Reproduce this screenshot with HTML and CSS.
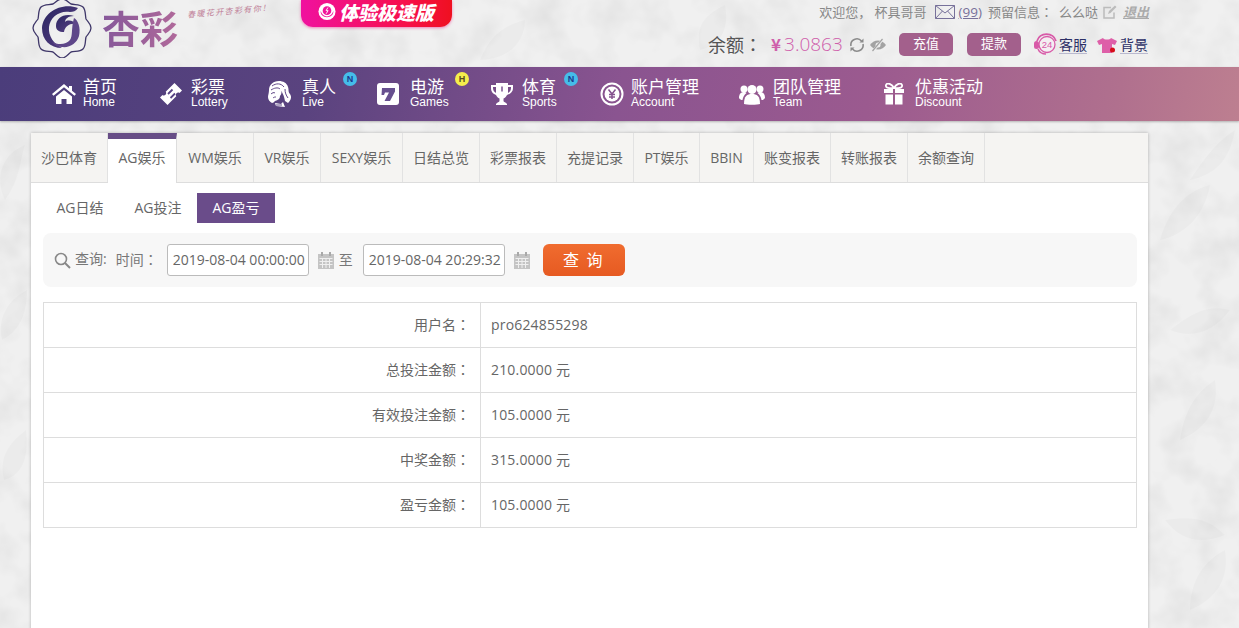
FILE: index.html
```html
<!DOCTYPE html>
<html lang="zh">
<head>
<meta charset="utf-8">
<title>AG盈亏</title>
<link rel="stylesheet" href="styles.css">
</head>
<body>
<header class="top">
  <div class="brand">
    <svg class="logo-mark" viewBox="0 0 60 60">
      <defs><linearGradient id="lg" x1="0" y1="0" x2="1" y2="1"><stop offset="0" stop-color="#2a2560"/><stop offset="1" stop-color="#5b4287"/></linearGradient></defs>
      <path d="M30 1c4 0 6 3 9 5 4 1 9 0 12 3s2 8 3 12c2 3 5 5 5 9s-3 6-5 9c-1 4 0 9-3 12s-8 2-12 3c-3 2-5 6-9 6s-6-4-9-6c-4-1-9 0-12-3s-2-8-3-12c-2-3-5-5-5-9s3-6 5-9c1-4 0-9 3-12s8-2 12-3c3-2 5-5 9-5z" fill="none" stroke="#3f3769" stroke-width="1.300"/>
      <path d="M46 10C30 4 11 14 10 30c0 12 8 20 20 20-8-4-14-12-13-21 1-10 11-17 21-15 3 0 6-1 8-4z" fill="url(#lg)"/>
      <path d="M24 28c0-8 8-13 18-10-6 0-9 3-9 6 3-3 9-1 11 2-6-1-11 2-12 8-5 0-8-2-8-6z" fill="url(#lg)"/>
      <path d="M42 20c4 2 7 10 5 18-2 7-9 12-17 11-4 0-8-2-10-5 6 3 14 3 18-2 3-4 1-12 4-22z" fill="#5e4689"/>
    </svg>
    <span class="logo-word">杏彩</span>
    <span class="slogan">春暖花开杏彩有你！</span>
  </div>
  <a class="speed">
    <svg class="speed-icon" viewBox="0 0 20 20"><circle cx="10" cy="9.500" r="9.500" fill="#fff"/><path d="M3 9c2 8 12 8 14 0 1 9-15 9-14 0z" fill="#f0159a"/><circle cx="10" cy="8.500" r="4.800" fill="#f0159a"/><path d="M11 5L9 8.500h2.200L9 12" stroke="#fff" fill="none"/></svg>
    <span>体验极速版</span>
  </a>
  <div class="account">
    <div class="welcome">
      <span class="w-name">欢迎您， 杯具哥哥</span>
      <svg class="mail" viewBox="0 0 20 14"><path d="M.5.5h19v13H.5zM.5.5L10 8l9.500-7.500M.5 13.500L7.500 6M19.500 13.500L12.500 6" fill="none" stroke="#77719a"/></svg>
      <a class="msg">(99)</a>
      <span class="w-info">预留信息<span class="colon" lang="zh-Hant">：</span></span>
      <span class="w-memo">么么哒</span>
      <svg class="edit" viewBox="0 0 14 14"><path d="M11 7.500V13H1V2.500h7" fill="none" stroke="#bbb" stroke-width="1.500"/><path d="M5 9l1-3 6-5.500 1.500 1.500L7.500 8z" fill="#bbb"/></svg>
      <a class="logout">退出</a>
    </div>
    <div class="balance">
      <span class="b-label">余额<span class="colon" lang="zh-Hant">：</span></span>
      <span class="b-money"><span class="yen">¥</span>3.0863</span>
      <svg class="refresh" viewBox="0 0 16 16"><path d="M2 9a6 6 0 0 1 10.500-5M14 7a6 6 0 0 1-10.500 5" fill="none" stroke="#8b8b8b" stroke-width="1.600"/><path d="M14.500 1.500v4h-4zM1.500 14.500v-4h4z" fill="#8b8b8b"/></svg>
      <svg class="eye" viewBox="0 0 18 14"><path d="M1 7c3-5 11-7 16 0-3 5-11 7-16 0z" fill="#a3a3a3"/><circle cx="9" cy="7" r="2.500" fill="#eee"/><path d="M4 13L14 1" stroke="#eee" stroke-width="2.500"/><path d="M3.500 13L13.500 1" stroke="#a3a3a3" stroke-width="1.200"/></svg>
      <a class="pill">充值</a>
      <a class="pill">提款</a>
      <svg class="svc" viewBox="0 0 23 23"><path d="M3 8a10 10 0 0 1 19 0" fill="none" stroke="#d85aa8" stroke-width="1.800"/><circle cx="13" cy="11.500" r="8" fill="#f4eef2" stroke="#d85aa8" stroke-width="1.300"/><rect x="0" y="8" width="5" height="8" rx="2.500" fill="#d85aa8"/><path d="M4 16q2 5 8 5" fill="none" stroke="#d85aa8" stroke-width="1.500"/><text x="13" y="15" text-anchor="middle" class="svc-txt">24</text></svg>
      <a class="link svc-link">客服</a>
      <svg class="shirt" viewBox="0 0 20 16"><path d="M6 1L0 4l2 4 3-1v9h10V7l3 1 2-4-6-3c-1 2-7 2-8 0z" fill="#de5fa8"/><circle cx="15.500" cy="13" r="2.500" fill="#d60d1a"/></svg>
      <a class="link">背景</a>
    </div>
  </div>
</header>

<nav class="nav">
  <a class="nav-item">
    <svg class="n-icon i-home" viewBox="0 0 24 22"><path d="M12 1L0 11l1.500 1.800L12 4.200l10.500 8.600L24 11l-4-3.300V3h-3v2.200z" fill="#fff"/><path d="M4 13.500L12 7l8 6.500V21h-5.500v-5h-5v5H4z" fill="#fff"/></svg>
    <span class="n-text"><b>首页</b><i>Home</i></span>
  </a>
  <a class="nav-item">
    <svg class="n-icon i-lot" viewBox="0 0 24 24"><path d="M15.500 1L23 8.500l-2.500 2.500c-1-.8-2.200-.6-3 .2s-1 2-.2 3L8.500 23 1 15.500l2.500-2.500c1 .8 2.200.6 3-.2s1-2 .2-3z" fill="#fff"/><path d="M9 12l4.500-4.500M11.500 16l4.500-4.500" fill="none" stroke="#584385" stroke-width="1.800"/></svg>
    <span class="n-text"><b>彩票</b><i>Lottery</i></span>
  </a>
  <a class="nav-item">
    <svg class="n-icon i-live" viewBox="0 0 26 28"><path d="M12 1C6 1 2 5 2 10c0 3-1 5-1 7 0 3 2 5 4 6 1 0 2-1 3-2 3-1 5-2 5-5 2-2 2-5 0-7 2 3 4 6 5 12l3 2c3-3 4-6 2-9-2-2-1-4-2-7-1-4-5-6-9-6z" fill="#fff"/><path d="M5 6c4-3 9-3 12 1M4 10c3-2 7-3 9-1M4 14c1-1 3-2 4-1M18 9c0 4 1 6 3 9M6 18c1-1 2-1 3-1" fill="none" stroke="#5f4686" stroke-width="1"/><path d="M8 23l1 3 9 1-2-5-2 2z" fill="#fff"/><path d="M9 25h6" stroke="#5f4686"/></svg>
    <span class="n-text"><b>真人</b><i>Live</i></span>
    <em class="badge b-n b-live">N</em>
  </a>
  <a class="nav-item">
    <svg class="n-icon i-game" viewBox="0 0 22 22"><rect width="22" height="22" rx="3" fill="#fff"/><path d="M5 5h13v3.500L13 18H7.500l4.500-8.500H8L7 12H4.500z" fill="#67508f"/></svg>
    <span class="n-text"><b>电游</b><i>Games</i></span>
    <em class="badge b-h">H</em>
  </a>
  <a class="nav-item">
    <svg class="n-icon i-sport" viewBox="0 0 22 24"><path d="M5 1h12v2h5v3c0 4-3 6-6 7-1 2-2 3-3.500 3.500V19c0 1 2.500 1.500 3.500 3v1H5v-1c1-1.500 3.500-2 3.500-3v-2.500C7 16 6 15 5 13 2.500 12 0 10 0 6V3h5zM2 5v1c0 2 1 4 3 5V5zM20 5h-3v6c2-1 3-3 3-5z" fill="#fff"/><path d="M11 4.500v5" stroke="#7a5390" stroke-width="1.500"/></svg>
    <span class="n-text"><b>体育</b><i>Sports</i></span>
    <em class="badge b-n b-sport">N</em>
  </a>
  <a class="nav-item">
    <svg class="n-icon i-acc" viewBox="0 0 24 24"><circle cx="12" cy="12" r="10.500" fill="none" stroke="#fff" stroke-width="2"/><circle cx="12" cy="12" r="7.500" fill="#fff"/><path d="M8.500 7.500L12 12l3.500-4.500M12 12v5M9 12.500h6M9 15h6" fill="none" stroke="#85528f" stroke-width="1.500"/></svg>
    <span class="n-text"><b>账户管理</b><i>Account</i></span>
  </a>
  <a class="nav-item">
    <svg class="n-icon i-team" viewBox="0 0 26 22"><circle cx="13" cy="6.500" r="4.500" fill="#fff"/><path d="M5 21c0-8 3-10 8-10s8 2 8 10c-2 1-14 1-16 0z" fill="#fff"/><circle cx="5" cy="6" r="3.500" fill="#fff"/><circle cx="21" cy="6" r="3.500" fill="#fff"/><path d="M0 15c0-4 2-6 5-6 1 0 2 0 2.500 1C5 12 4 14 3.500 17 2 17 1 16.500 0 15zM26 15c0-4-2-6-5-6-1 0-2 0-2.500 1 2.500 2 3.500 4 4 7 1.500 0 2.500-.5 3.500-2z" fill="#fff"/></svg>
    <span class="n-text"><b>团队管理</b><i>Team</i></span>
  </a>
  <a class="nav-item">
    <svg class="n-icon i-gift" viewBox="0 0 20 22"><path d="M10 5C8 1 3-1 2 2c-1 3 4 3.500 8 3zM10 5c2-4 7-6 8-3 1 3-4 3.500-8 3z" fill="none" stroke="#fff" stroke-width="1.800"/><rect x="0" y="6" width="9" height="4" fill="#fff"/><rect x="11" y="6" width="9" height="4" fill="#fff"/><rect x="1.500" y="11.500" width="7.500" height="10" fill="#fff"/><rect x="11" y="11.500" width="7.500" height="10" fill="#fff"/></svg>
    <span class="n-text"><b>优惠活动</b><i>Discount</i></span>
  </a>
</nav>

<main class="panel">
  <ul class="tabs">
    <li>沙巴体育</li>
    <li class="on">AG娱乐</li>
    <li>WM娱乐</li>
    <li>VR娱乐</li>
    <li>SEXY娱乐</li>
    <li>日结总览</li>
    <li>彩票报表</li>
    <li>充提记录</li>
    <li>PT娱乐</li>
    <li>BBIN</li>
    <li>账变报表</li>
    <li>转账报表</li>
    <li>余额查询</li>
  </ul>
  <div class="subtabs">
    <a>AG日结</a>
    <a>AG投注</a>
    <a class="on">AG盈亏</a>
  </div>
  <form class="search">
    <svg class="s-icon" viewBox="0 0 17 17"><circle cx="7" cy="7" r="5.500" fill="none" stroke="#888" stroke-width="1.600"/><path d="M11 11l5 5" stroke="#888" stroke-width="2"/></svg>
    <span class="s-q">查询:</span>
    <span class="s-t">时间<span class="colon" lang="zh-Hant">：</span></span>
    <input class="date" value="2019-08-04 00:00:00">
    <svg class="cal" viewBox="0 0 16 17"><path d="M0 2h16v15H0z" fill="#c4c4c4"/><path d="M3 0h2v4H3zM11 0h2v4h-2z" fill="#a9a9a9"/><path d="M1.500 6.500h13M1.500 9.500h13M1.500 12.500h13M4.500 6v10M8 6v10M11.500 6v10" stroke="#efefef"/></svg>
    <span class="s-to">至</span>
    <input class="date" value="2019-08-04 20:29:32">
    <svg class="cal" viewBox="0 0 16 17"><path d="M0 2h16v15H0z" fill="#c4c4c4"/><path d="M3 0h2v4H3zM11 0h2v4h-2z" fill="#a9a9a9"/><path d="M1.500 6.500h13M1.500 9.500h13M1.500 12.500h13M4.500 6v10M8 6v10M11.500 6v10" stroke="#efefef"/></svg>
    <button class="go" type="button">查 询</button>
  </form>
  <table class="report">
    <tr><th>用户名<span class="colon" lang="zh-Hant">：</span></th><td>pro624855298</td></tr>
    <tr><th>总投注金额<span class="colon" lang="zh-Hant">：</span></th><td>210.0000 元</td></tr>
    <tr><th>有效投注金额<span class="colon" lang="zh-Hant">：</span></th><td>105.0000 元</td></tr>
    <tr><th>中奖金额<span class="colon" lang="zh-Hant">：</span></th><td>315.0000 元</td></tr>
    <tr><th>盈亏金额<span class="colon" lang="zh-Hant">：</span></th><td>105.0000 元</td></tr>
  </table>
</main>
</body>
</html>
```
FILE: styles.css
```css
* { box-sizing: border-box; }
html, body { margin: 0; height: 628px; overflow: hidden; }
body {
  font-family: "Open Sans", "Noto Sans CJK SC", sans-serif;
  font-size: 14px;
  color: #666;
  background-color: #f0f0f0;
  background-image: url("data:image/svg+xml,%3Csvg xmlns='http://www.w3.org/2000/svg' width='1239' height='628'%3E%3Cfilter id='n'%3E%3CfeTurbulence type='fractalNoise' baseFrequency='0.03' numOctaves='3' seed='7'/%3E%3CfeColorMatrix values='0 0 0 0 0.5 0 0 0 0 0.5 0 0 0 0 0.5 0.5 0 0 0 -0.2'/%3E%3C/filter%3E%3Crect width='1239' height='628' filter='url(%23n)'/%3E%3Cg fill='%23000' opacity='.018'%3E%3Cpath d='M1190 180c20-30 30-40 45-50-5 30-20 45-45 50zM1160 240c10-35 30-50 50-55-5 30-25 50-50 55zM1170 330c25-20 40-25 60-20-15 20-35 30-60 20zM1180 440c5-35 20-50 35-60 5 30-10 50-35 60zM1165 520c30-5 45 0 60 15-25 10-45 5-60-15zM1190 610c0-30 15-50 35-60 5 30-10 50-35 60zM5 200c15-20 15-40 20-55-25 10-30 35-20 55zM2 340c20-10 25-30 25-50-20 10-30 30-25 50zM4 480c20-5 25-25 22-50-20 15-27 30-22 50zM480 60c10-25 25-35 45-40 0 25-20 40-45 40zM700 50c-5-25 5-35 25-45 5 25-5 40-25 45z'/%3E%3C/g%3E%3C/svg%3E");
}
a { color: inherit; text-decoration: none; }
.colon { font-family: "Noto Sans CJK TC", sans-serif; }

/* header */
.top {
  height: 67px;
  display: flex;
  padding: 0 91px 0 32px;
  overflow: hidden;
}
.brand { display: flex; width: 269px; align-items: flex-start; }
.logo-mark { width: 60px; height: 60px; margin-top: -2px; flex: none; }
.logo-word {
  margin: 0 0 0 10px;
  font-size: 38px;
  line-height: 56px;
  font-weight: 700;
  flex: none;
  background: linear-gradient(90deg, #86589a, #b0699a);
  -webkit-background-clip: text;
  background-clip: text;
  color: transparent;
}
.slogan {
  flex: none;
  margin: 5px 0 0 9px;
  height: 13px;
  font-size: 8px;
  line-height: 12px;
  letter-spacing: 1.400px;
  font-style: italic;
  color: #c07f98;
  transform: rotate(-5deg);
}
.speed {
  flex: none;
  width: 151px;
  height: 27px;
  display: flex;
  align-items: center;
  gap: 3px;
  padding: 0 0 4px 17px;
  border-radius: 0 0 12px 12px;
  background: linear-gradient(90deg, #f0119f, #f7104a 70%, #ef1020);
  box-shadow: 0 1px 3px rgba(240, 20, 130, .5);
  color: #fff;
  font-size: 19px;
  font-weight: 900;
  font-style: italic;
  white-space: nowrap;
}
.speed-icon { width: 18px; height: 18px; flex: none; }
.account { margin-left: auto; display: flex; flex-direction: column; align-items: flex-end; }
.welcome {
  display: flex;
  align-items: center;
  height: 23px;
  margin-right: -1px;
  font-size: 13px;
  color: #888;
  white-space: nowrap;
}
.mail { width: 20px; height: 14px; margin: 1px 4px 0 8px; }
.msg { text-decoration: underline; color: #77719a; font-size: 13.500px; }
.w-info { margin-left: 6px; }
.w-memo { margin-left: 6px; }
.edit { width: 14px; height: 14px; margin: 0 6px 0 5px; }
.logout { font-style: italic; font-weight: 700; color: #aaa; text-decoration: underline; }
.balance { display: flex; align-items: center; height: 23px; margin-top: 10px; }
.b-label { font-size: 18px; color: #555; width: 63px; white-space: nowrap; margin-top: -1px; }
.b-money { font-size: 19px; font-weight: 300; color: #cf5fab; width: 78px; white-space: nowrap; margin-top: -1px; }
.yen { font-size: 17px; font-weight: 600; font-family: "Noto Sans CJK SC", sans-serif; margin-right: 3px; }
.refresh { width: 16px; height: 16px; margin-right: 4px; }
.eye { width: 18px; height: 14px; margin-right: 12px; }
.pill {
  width: 54px;
  height: 23px;
  line-height: 21px;
  margin-right: 14px;
  text-align: center;
  border-radius: 5px;
  color: #fff;
  background: #a3608c;
  font-size: 13px;
}
.svc { width: 23px; height: 23px; margin-left: -1px; margin-right: 2px; }
.svc-txt { font-size: 9.500px; fill: #d85aa8; font-family: "Liberation Sans", sans-serif; }
.link {
  font-size: 14px;
  line-height: 17px;
  color: #2c2f66;
  border-bottom: 1px solid #b9b9cf;
}
.svc-link { margin-right: 10px; }
.shirt { width: 20px; height: 16px; margin-right: 3px; }

/* nav */
.nav {
  height: 54px;
  display: grid;
  grid-template-columns: 107px 108px 110px 114px 109px 139px 145px 1fr;
  padding-left: 52px;
  background: linear-gradient(100deg, #4b3d7b 0%, #5a437f 25%, #8a5490 50%, #9b5a8f 70%, #b0708e 90%, #bd7f90 100%);
  box-shadow: 0 1px 2px rgba(0, 0, 0, .25);
  color: #fff;
}
.nav-item { display: flex; align-items: center; position: relative; height: 54px; }
.n-icon { flex: none; }
.i-home { width: 24px; height: 22px; margin-right: 7px; }
.i-lot { width: 24px; height: 24px; margin-right: 8px; }
.i-live { width: 26px; height: 28px; margin-right: 9px; }
.i-game { width: 22px; height: 22px; margin-right: 11px; }
.i-sport { width: 22px; height: 24px; margin-right: 9px; }
.i-acc { width: 24px; height: 24px; margin-right: 7px; }
.i-team { width: 26px; height: 22px; margin-right: 8px; }
.i-gift { width: 20px; height: 22px; margin: 0 11px 0 0; }
.n-text { display: flex; flex-direction: column; margin-top: -3px; }
.n-text b { font-weight: 400; font-size: 17px; line-height: 18px; white-space: nowrap; }
.n-text i { font-style: normal; font-family: "Liberation Sans", sans-serif; font-size: 12px; line-height: 12px; }
.badge {
  position: absolute;
  top: 5px;
  width: 14px;
  height: 14px;
  border-radius: 50%;
  font: 700 9px/14px "Liberation Sans", sans-serif;
  text-align: center;
}
.b-n { background: #45bde9; color: #1b3b8c; }
.b-live { left: 76px; }
.b-sport { left: 73px; }
.b-h { background: #f4ee4c; color: #554a20; left: 78px; }

/* panel */
.panel {
  width: 1117px;
  height: 520px;
  margin: 12px 0 0 31px;
  background: #fff;
  box-shadow: 0 0 3px rgba(0, 0, 0, .25);
}
.tabs {
  list-style: none;
  margin: 0;
  padding: 0;
  height: 50px;
  display: grid;
  grid-template-columns: 77px 69px 77px 67px 82px 77px 77px 77px 66px 54px 77px 77px 77px;
  background: #f5f4f2;
  border-bottom: 1px solid #ddd;
}
.tabs li {
  line-height: 50px;
  height: 49px;
  text-align: center;
  border-right: 1px solid #e2e2e2;
  color: #666;
  white-space: nowrap;
}
.tabs li.on {
  height: 50px;
  background: #fff;
  border-top: 6px solid #674d86;
  line-height: 38px;
  border-right: 1px solid #ddd;
}
.subtabs { display: flex; padding: 10px 0 0 10px; height: 40px; }
.subtabs a { width: 78px; height: 30px; line-height: 30px; text-align: center; color: #666; }
.subtabs a.on { background: #6a4c8a; color: #fff; }
.search {
  margin: 10px 11px 0 12px;
  height: 54px;
  display: flex;
  align-items: center;
  padding-left: 11px;
  border-radius: 8px;
  background: #f7f7f7;
  color: #777;
}
.s-icon { width: 17px; height: 17px; margin-right: 4px; }
.s-q { font-size: 14px; margin-right: 9px; line-height: 24px; margin-top: -2px; }
.s-t { font-size: 14px; width: 51px; margin-top: -2px; white-space: nowrap; }
.date {
  width: 142px;
  height: 32px;
  padding: 0 0 2px 5px;
  border: 1px solid #bbb;
  border-radius: 3px;
  background: #fff;
  color: #666;
  font: 14px "Open Sans", sans-serif;
}
.cal { width: 16px; height: 17px; margin: 0 5px 0 9px; }
.s-to { font-size: 14px; width: 24px; margin-top: -2px; }
.go {
  width: 82px;
  height: 32px;
  margin-left: 13px;
  padding: 0 0 2px;
  border: 0;
  border-radius: 6px;
  background: linear-gradient(180deg, #f06c2f, #e65a22);
  color: #fff;
  font: 16px "Noto Sans CJK SC", sans-serif;
  letter-spacing: 2px;
}
.cal + .s-to + .date + .cal { margin-right: 0; }
.report {
  margin: 15px 0 0 12px;
  width: 1094px;
  border-collapse: collapse;
  table-layout: fixed;
}
.report th, .report td {
  height: 45px;
  border: 1px solid #ddd;
  font-weight: 400;
  padding: 0 10px 2px;
}
.report td { letter-spacing: .18px; }
.report th { width: 437px; text-align: right; }
```
